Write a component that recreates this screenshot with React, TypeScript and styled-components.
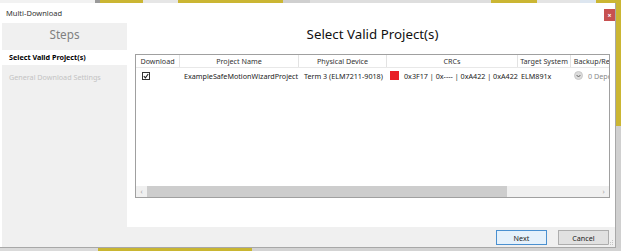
import styled, { createGlobalStyle } from 'styled-components';

const GlobalStyle = createGlobalStyle`
  html, body {
    margin: 0;
    padding: 0;
    background: #d4d4d4;
  }
  * {
    box-sizing: border-box;
  }
`

type SegmentProps = {
  $w?: number,
  $h?: number,
  $c: string,
}

const FONT = `"Noto Sans", "Open Sans", sans-serif`

const Screen = styled.div`
  width: 621px;
  height: 251px;
  display: flex;
  flex-direction: column;
  overflow: hidden;
  background: #d6d6d6;
  font-family: ${FONT};
`

const Strip = styled.div`
  display: flex;
  height: 3px;
  flex-shrink: 0;
`

const Segment = styled.div<SegmentProps>`
  flex: ${p => (p.$w ? `0 0 ${p.$w}px` : '1')};
  height: ${p => (p.$h ? `${p.$h}px` : 'auto')};
  background: ${p => p.$c};
`

const Middle = styled.div`
  display: flex;
  height: 245px;
`

const RightStrip = styled.div`
  flex: 1;
  display: flex;
  flex-direction: column;
`

const Dialog = styled.div`
  position: relative;
  flex: 0 0 616px;
  min-width: 0;
  overflow: hidden;
  display: flex;
  flex-direction: column;
  background: #ffffff;
  border-right: 1px solid #a8a8a8;
  border-bottom: 1px solid #a8a8a8;
`

const TitleBar = styled.div`
  height: 20px;
  display: flex;
  align-items: center;
  justify-content: space-between;
  padding: 0 0 0 6px;
  font-size: 7.5px;
  color: #333;
`

const CloseButton = styled.div`
  width: 11px;
  height: 12px;
  margin-top: 4px;
  background: #c75050;
  color: #fff;
  font-size: 7px;
  font-weight: bold;
  display: flex;
  align-items: center;
  justify-content: center;
`

const Body = styled.div`
  flex: 1;
  display: flex;
  padding: 0 1px 0 2px;
  min-height: 0;
  min-width: 0;
`

const Sidebar = styled.div`
  flex: 0 0 125px;
  display: flex;
  flex-direction: column;
  gap: 5px;
  background: #f0f0f0;
`

const StepsHeader = styled.div`
  height: 22px;
  line-height: 22px;
  text-align: center;
  font-size: 11.7px;
  color: #808080;
`

const StepItem = styled.div<{ $active?: boolean }>`
  height: 15px;
  line-height: 15px;
  padding-left: 7px;
  font-size: 7.2px;
  font-weight: ${p => (p.$active ? 'bold' : 'normal')};
  color: ${p => (p.$active ? '#000' : '#c3c3c3')};
  background: ${p => (p.$active ? '#fff' : 'transparent')};
`

const Main = styled.div`
  flex: 1;
  min-width: 0;
  display: flex;
  flex-direction: column;
  padding: 0 4px 0 8px;
`

const PageTitle = styled.div`
  height: 31px;
  line-height: 22px;
  text-align: center;
  font-size: 13.3px;
  color: #111;
`

const TableBox = styled.div`
  height: 144px;
  display: flex;
  flex-direction: column;
  border: 1px solid #a0a0a0;
  font-size: 7.2px;
  overflow: hidden;
`

const Viewport = styled.div`
  flex: 1;
  overflow: hidden;
`

const Row = styled.div<{ $header?: boolean }>`
  display: flex;
  height: ${p => (p.$header ? '13px' : '15px')};
  align-items: center;
  white-space: nowrap;
  border-bottom: ${p => (p.$header ? '1px solid #e8e8e8' : 'none')};
  color: ${p => (p.$header ? '#333' : '#222')};
`

const Cell = styled.div<{ $w: number, $header?: boolean, $pad?: number }>`
  flex: 0 0 ${p => p.$w}px;
  height: 100%;
  display: flex;
  align-items: center;
  gap: 5px;
  overflow: hidden;
  justify-content: ${p => (p.$header ? 'center' : 'flex-start')};
  padding-left: ${p => (p.$header ? 0 : p.$pad ?? 4)}px;
  border-right: ${p => (p.$header ? '1px solid #e3e3e3' : 'none')};
`

const CheckBox = styled.div`
  width: 8px;
  height: 8px;
  border: 1px solid #333;
  background: #fff;
  display: flex;
  align-items: center;
  justify-content: center;
`

const StatusSquare = styled.div`
  width: 9px;
  height: 9px;
  flex-shrink: 0;
  background: #e81e25;
`

const DropCircle = styled.div`
  width: 9px;
  height: 9px;
  flex-shrink: 0;
  border-radius: 50%;
  background: #dcdcdc;
  border: 1px solid #cacaca;
  display: flex;
  align-items: center;
  justify-content: center;
`

const Faded = styled.span`
  color: #8a8a8a;
`

const ScrollBar = styled.div`
  height: 11px;
  display: flex;
  align-items: stretch;
  background: #f0f0f0;
`

const ScrollArrow = styled.div`
  width: 11px;
  display: flex;
  align-items: center;
  justify-content: center;
  color: #a6a6a6;
  font-size: 7px;
`

const Track = styled.div`
  flex: 1;
  display: flex;
`

const Thumb = styled.div`
  background: #cdcdcd;
`

const Footer = styled.div`
  height: 20px;
  margin: 0 0 0 2px;
  display: flex;
  justify-content: flex-end;
  align-items: flex-start;
  gap: 11px;
  padding: 3px 6px 0 0;
  background: #f0f0f0;
`

const Button = styled.div<{ $primary?: boolean }>`
  width: 51px;
  height: 15px;
  display: flex;
  align-items: center;
  justify-content: center;
  font-size: 7.2px;
  color: #222;
  background: ${p => (p.$primary ? '#e5f1fb' : '#e1e1e1')};
  border: 1px solid ${p => (p.$primary ? '#4a90d0' : '#adadad')};
`

const Grip = styled.svg`
  position: absolute;
  right: 1px;
  bottom: 1px;
`

const columns = [
  { title: 'Download', w: 44 },
  { title: 'Project Name', w: 119 },
  { title: 'Physical Device', w: 88 },
  { title: 'CRCs', w: 131 },
  { title: 'Target System', w: 53 },
  { title: 'Backup/Restore', w: 60 },
]

const topSegments: SegmentProps[] = [
  { $w: 95, $c: '#f2f2f2' },
  { $w: 5, $c: '#9a9a9a' },
  { $w: 43, $c: '#cbb633' },
  { $w: 35, $c: '#e6e6e6' },
  { $w: 105, $c: '#cbb633' },
  { $w: 27, $c: '#cfcfcf' },
  { $w: 181, $c: '#dedede' },
  { $w: 46, $c: '#cbb633' },
  { $w: 43, $c: '#e4e4e4' },
  { $w: 16, $c: '#dde6f0' },
  { $c: '#cbb633' },
]

const bottomSegments: SegmentProps[] = [
  { $w: 98, $c: '#dadada' },
  { $w: 154, $c: '#c9b632' },
  { $c: '#d3d3d3' },
]

export default function App() {
  return (
    <>
      <GlobalStyle />
      <Screen>
        <Strip>
          {topSegments.map((s, i) => <Segment key={i} {...s} />)}
        </Strip>
        <Middle>
          <Dialog>
            <TitleBar>
              <span>Multi-Download</span>
              <CloseButton>×</CloseButton>
            </TitleBar>
            <Body>
              <Sidebar>
                <StepsHeader>Steps</StepsHeader>
                <StepItem $active>Select Valid Project(s)</StepItem>
                <StepItem>General Download Settings</StepItem>
              </Sidebar>
              <Main>
                <PageTitle>Select Valid Project(s)</PageTitle>
                <TableBox>
                  <Viewport>
                    <Row $header>
                      {columns.map(c => (
                        <Cell key={c.title} $w={c.w} $header>{c.title}</Cell>
                      ))}
                    </Row>
                    <Row>
                      <Cell $w={44} $pad={6}>
                        <CheckBox>
                          <svg width="6" height="6" viewBox="0 0 6 6">
                            <path d="M0.8 3.2 L2.4 4.8 L5.2 1" fill="none" stroke="#222" strokeWidth="1.1" />
                          </svg>
                        </CheckBox>
                      </Cell>
                      <Cell $w={119}>ExampleSafeMotionWizardProject</Cell>
                      <Cell $w={88} $pad={5}>Term 3 (ELM7211-9018)</Cell>
                      <Cell $w={131} $pad={3}>
                        <StatusSquare />
                        <span>0x3F17 | 0x---- | 0xA422 | 0xA422</span>
                      </Cell>
                      <Cell $w={53} $pad={3}>ELM891x</Cell>
                      <Cell $w={60} $pad={3}>
                        <DropCircle>
                          <svg width="5" height="4" viewBox="0 0 5 4">
                            <path d="M0.6 1 L2.5 3 L4.4 1" fill="none" stroke="#666" strokeWidth="1" />
                          </svg>
                        </DropCircle>
                        <Faded>0 Dependencies</Faded>
                      </Cell>
                    </Row>
                  </Viewport>
                  <ScrollBar>
                    <ScrollArrow>‹</ScrollArrow>
                    <Track>
                      <Thumb style={{ width: 360 }} />
                    </Track>
                    <ScrollArrow>›</ScrollArrow>
                  </ScrollBar>
                </TableBox>
              </Main>
            </Body>
            <Footer>
              <Button $primary>Next</Button>
              <Button>Cancel</Button>
            </Footer>
            <Grip width="6" height="6" viewBox="0 0 6 6">
              <rect x="4" y="0" width="1" height="1" fill="#c4c4c4" />
              <rect x="2" y="2" width="1" height="1" fill="#c4c4c4" />
              <rect x="4" y="2" width="1" height="1" fill="#c4c4c4" />
              <rect x="0" y="4" width="1" height="1" fill="#c4c4c4" />
              <rect x="2" y="4" width="1" height="1" fill="#c4c4c4" />
              <rect x="4" y="4" width="1" height="1" fill="#c4c4c4" />
            </Grip>
          </Dialog>
          <RightStrip>
            <Segment $h={95} $c="#cbb633" />
            <Segment $c="#d0d0d0" />
          </RightStrip>
        </Middle>
        <Strip>
          {bottomSegments.map((s, i) => <Segment key={i} {...s} />)}
        </Strip>
      </Screen>
    </>
  )
}
